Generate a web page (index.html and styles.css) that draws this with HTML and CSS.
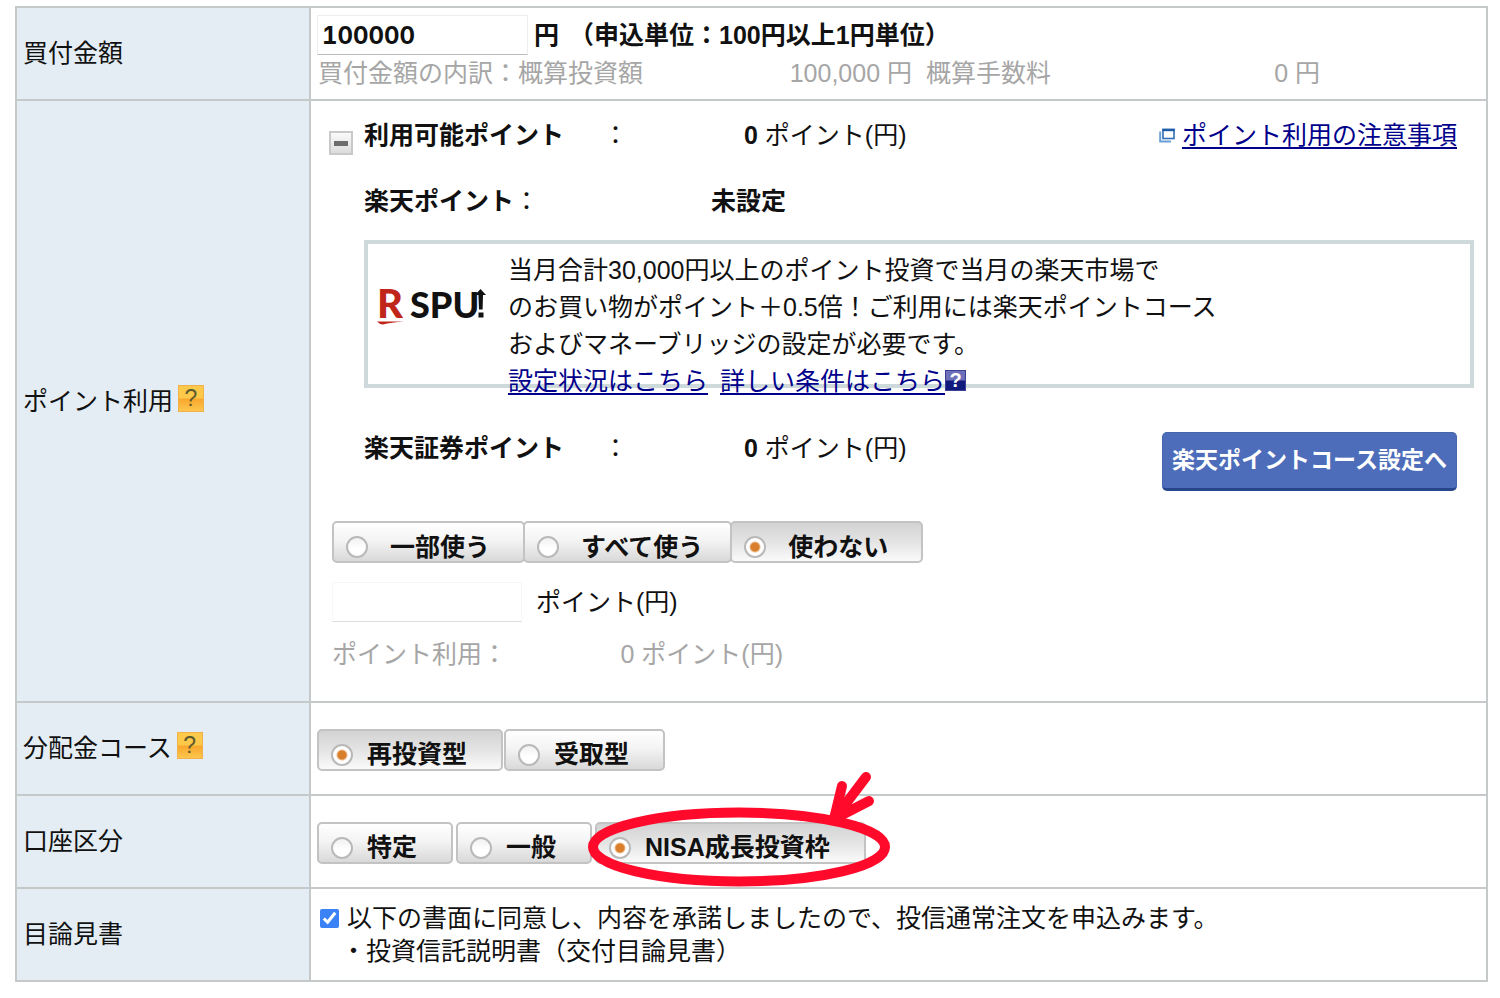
FILE: index.html
```html
<!DOCTYPE html>
<html lang="ja">
<head>
<meta charset="utf-8">
<title>投信通常注文</title>
<link rel="stylesheet" href="styles.css">
</head>
<body>
<form class="order">
<table class="order-table">
  <tr class="row-amount">
    <th scope="row"><label for="amount">買付金額</label></th>
    <td>
      <div class="amount-line">
        <input class="field amount-input" id="amount" type="text" value="100000">
        <span>円</span>
        <span class="unit-note">（申込単位：100円以上1円単位）</span>
      </div>
      <div class="breakdown">
        <span>買付金額の内訳：概算投資額</span>
        <span class="breakdown-value">100,000 円</span>
        <span class="breakdown-fee">概算手数料</span>
        <span class="breakdown-value">0 円</span>
      </div>
    </td>
  </tr>
  <tr class="row-points">
    <th scope="row"><span class="heading">ポイント利用 <button class="help" type="button" aria-label="ポイント利用のヘルプ">?</button></span></th>
    <td>
      <div class="points">
        <button class="collapse" type="button" aria-label="閉じる"></button>
        <div class="points-list">
          <div class="point-line">
            <b>利用可能ポイント</b><span>：</span><span><b>0</b> ポイント(円)</span>
            <span class="note-link">
              <svg class="window-icon" viewBox="0 0 16 15" width="16" height="15" aria-hidden="true">
                <path d="M1.2 3.5V13.4H12" fill="none" stroke="#6a9fd6" stroke-width="2"/>
                <rect x="4" y="1.5" width="11" height="9" fill="#fff" stroke="#2f6fb5" stroke-width="1.6"/>
                <path d="M3.3 2H15.8" stroke="#1f5ca8" stroke-width="2.4"/>
              </svg>
              <a href="#">ポイント利用の注意事項</a>
            </span>
          </div>
          <div class="point-line rakuten-line">
            <span><b>楽天ポイント</b>：</span><b>未設定</b>
          </div>
          <div class="campaign">
            <svg class="spu-logo" viewBox="0 0 112 60" width="112" height="60" role="img" aria-label="R SPU">
              <text class="logo-r" x="1" y="43">R</text>
              <path d="M1 46.5H28Q15 47.3 7 49.6Q3 49 1 46.5Z" fill="#bf2519"/>
              <text class="logo-spu" x="34" y="43">SPU</text>
              <path d="M104.5 14L110 20H107L106.6 34.5H103L102.4 20H99Z" fill="#111"/>
              <rect x="102.5" y="37.5" width="5" height="5" fill="#111"/>
            </svg>
            <div class="campaign-text">
              当月合計30,000円以上のポイント投資で当月の楽天市場で<br>
              のお買い物がポイント＋0.5倍！ご利用には楽天ポイントコース<br>
              およびマネーブリッジの設定が必要です。<br>
              <span class="campaign-links"><a href="#">設定状況はこちら</a><a href="#">詳しい条件はこちら</a><button class="help help-blue" type="button" aria-label="条件のヘルプ">?</button></span>
            </div>
          </div>
          <div class="point-line sec-line">
            <b>楽天証券ポイント</b><span>：</span><span><b>0</b> ポイント(円)</span>
            <button class="course-button" type="button">楽天ポイントコース設定へ</button>
          </div>
        </div>
      </div>
      <div class="usage">
        <div class="segments segments-joined">
          <label class="segment"><input type="radio" name="use">一部使う</label>
          <label class="segment segment-tight"><input type="radio" name="use">すべて使う</label>
          <label class="segment"><input type="radio" name="use" checked>使わない</label>
        </div>
        <div class="use-line">
          <input class="field use-input" id="use-points" type="text">
          <label for="use-points">ポイント(円)</label>
        </div>
        <div class="use-total">
          <span>ポイント利用：</span><span class="use-value">0 ポイント(円)</span>
        </div>
      </div>
    </td>
  </tr>
  <tr class="row-choice">
    <th scope="row"><span class="heading">分配金コース <button class="help" type="button" aria-label="分配金コースのヘルプ">?</button></span></th>
    <td>
      <div class="segments segments-close">
        <label class="segment"><input type="radio" name="course" checked>再投資型</label>
        <label class="segment"><input type="radio" name="course">受取型</label>
      </div>
    </td>
  </tr>
  <tr class="row-choice">
    <th scope="row">口座区分</th>
    <td>
      <div class="segments">
        <label class="segment"><input type="radio" name="account">特定</label>
        <label class="segment"><input type="radio" name="account">一般</label>
        <label class="segment"><input type="radio" name="account" checked>NISA成長投資枠
          <svg class="marker" viewBox="0 0 308 120" width="308" height="120" aria-hidden="true">
            <g fill="none" stroke="#ff0a2b" stroke-width="10" stroke-linecap="round" stroke-linejoin="round">
              <ellipse cx="153" cy="78" rx="146" ry="34.5"/>
              <path d="M280 8L249 49M256 17L248 50L283 32"/>
            </g>
          </svg>
        </label>
      </div>
    </td>
  </tr>
  <tr class="row-choice">
    <th scope="row">目論見書</th>
    <td>
      <div class="consent">
        <input class="tick" id="agree" type="checkbox" checked>
        <label for="agree">以下の書面に同意し、内容を承諾しましたので、投信通常注文を申込みます。</label>
      </div>
      <div class="document">・投資信託説明書（交付目論見書）</div>
    </td>
  </tr>
</table>
</form>
</body>
</html>
```

FILE: styles.css
```css
* { box-sizing: border-box; }

body {
  margin: 6px 12px 16px 15px;
  background: #fff;
  color: #111;
  font: 25px/37px "Liberation Sans", "Noto Sans CJK JP", sans-serif;
}

button, input { font: inherit; color: inherit; }

a { color: #00008b; text-decoration-thickness: 2px; text-underline-offset: 3px; }

.order-table {
  width: 100%;
  border-collapse: collapse;
}

.order-table th,
.order-table td {
  border: 2px solid #c6c9c9;
  text-align: left;
}

.order-table th {
  width: 294px;
  padding: 0 6px;
  background: #e4edf3;
  font-weight: normal;
}

.order-table td { padding: 0 12px 0 6px; }

.row-amount { height: 93px; }
.row-choice { height: 93px; }

.heading { display: flex; align-items: center; gap: 5px; }

.help {
  width: 26px;
  height: 27px;
  margin-bottom: 6px;
  padding: 0;
  border: 1px solid #f0b04a;
  background: linear-gradient(#fdc94a 0 48%, #f9a62c 52%, #fdc64e);
  color: #5e5a2c;
  font-size: 23px;
  line-height: 25px;
  text-align: center;
}

.field {
  border: 1px solid #eee;
  background: #fff;
  height: 40px;
}

.amount-line { display: flex; align-items: center; font-weight: bold; }
.amount-line span { margin-left: 6px; }
.amount-line .unit-note { margin-left: 10px; }

.amount-input {
  width: 211px;
  padding: 0 4px;
  border-bottom-color: #bbb;
  font: 700 24px/36px Inter, sans-serif;
  font-variant-numeric: tabular-nums;
}

.breakdown { display: flex; padding-left: 1px; color: #a6a6a6; }
.breakdown-value { width: 269px; text-align: right; }
.breakdown-fee { margin-left: 14px; }

.points { display: flex; padding-top: 16px; }

.collapse {
  position: relative;
  width: 24px;
  height: 24px;
  margin: 14px 11px 0 12px;
  padding: 0;
  border: 2px solid #c9c9c9;
  background: linear-gradient(#fafafa, #dcdcdc);
}

.collapse::before {
  content: "";
  position: absolute;
  left: 3px;
  right: 3px;
  top: 8px;
  height: 5px;
  background: #6c6c6c;
}

.points-list { flex: 1; }

.point-line {
  display: grid;
  grid-template-columns: 239px 141px auto 1fr;
  padding-right: 17px;
}

.rakuten-line { grid-template-columns: 347px 1fr; margin-top: 29px; }

.note-link { display: flex; gap: 7px; align-items: center; justify-self: end; }

.campaign {
  display: flex;
  gap: 20px;
  height: 148px;
  margin-top: 20px;
  padding: 8px 8px 0;
  border: 4px solid #cdd9db;
}

.spu-logo { margin-top: 23px; }
.logo-r { font: 900 40px Lato, sans-serif; fill: #bf2519; }
.logo-spu { font: 900 36px Lato, sans-serif; fill: #111; }

.campaign-links { display: flex; align-items: center; }
.campaign-links a + a { margin-left: 12px; }

.help-blue {
  width: 21px;
  height: 21px;
  margin-bottom: 2px;
  border-color: #3b3f95;
  background: linear-gradient(#6d70b8 0 48%, #10197c 52%);
  color: #fff;
  font-weight: bold;
  font-size: 20px;
  line-height: 19px;
}

.sec-line { height: 61px; margin-top: 42px; }

.course-button {
  justify-self: end;
  align-self: end;
  width: 295px;
  height: 59px;
  padding: 0;
  border: 1px solid #4467ae;
  border-bottom: 3px solid #27478c;
  border-radius: 5px;
  background: #4d6dba;
  color: #fff;
  font-size: 23px;
  font-weight: bold;
  white-space: nowrap;
}

.usage { padding: 30px 0 28px 15px; }

.segments { display: flex; gap: 3px; padding-top: 2px; }
.segments-close { gap: 1px; }
.segments-joined { gap: 0; padding-top: 0; }

.segment {
  position: relative;
  display: flex;
  align-items: center;
  gap: 14px;
  height: 42px;
  padding: 10px 34px 0 12px;
  border: 2px solid #c3c3c3;
  border-radius: 5px;
  background: linear-gradient(#fff, #f4f4f4 45%, #d9d9d9);
  font-weight: bold;
  white-space: nowrap;
}

.segment:has(:checked) { background: linear-gradient(#d3d3d3, #e4e4e4 50%, #fafafa); }
.segments-joined .segment { gap: 22px; margin-right: -2px; padding-right: 33px; }
.segments-joined .segment-tight { padding-right: 27px; }

.segment input {
  appearance: none;
  width: 22px;
  height: 22px;
  margin: 0;
  border: 2px solid #b9b9b9;
  border-radius: 50%;
  background: linear-gradient(#f1f1f1, #fff 60%);
}

.segment input:checked { background: radial-gradient(circle, #d97f2c 0 4px, #fff 6px); }

.marker {
  position: absolute;
  left: -11px;
  top: -55px;
  z-index: 1;
  pointer-events: none;
}

.use-line { display: flex; align-items: center; gap: 14px; margin-top: 19px; }

.use-input {
  width: 190px;
  border-color: #f7f7f7;
  border-bottom-color: #ddd;
}

.use-total { display: flex; margin-top: 14px; color: #a6a6a6; }
.use-value { width: 276px; text-align: right; }

.consent { display: flex; align-items: center; gap: 8px; padding-left: 3px; line-height: 33px; }
.tick { width: 19px; height: 19px; margin: 0; accent-color: #3b82f6; }
.document { padding-left: 24px; line-height: 33px; }
```
